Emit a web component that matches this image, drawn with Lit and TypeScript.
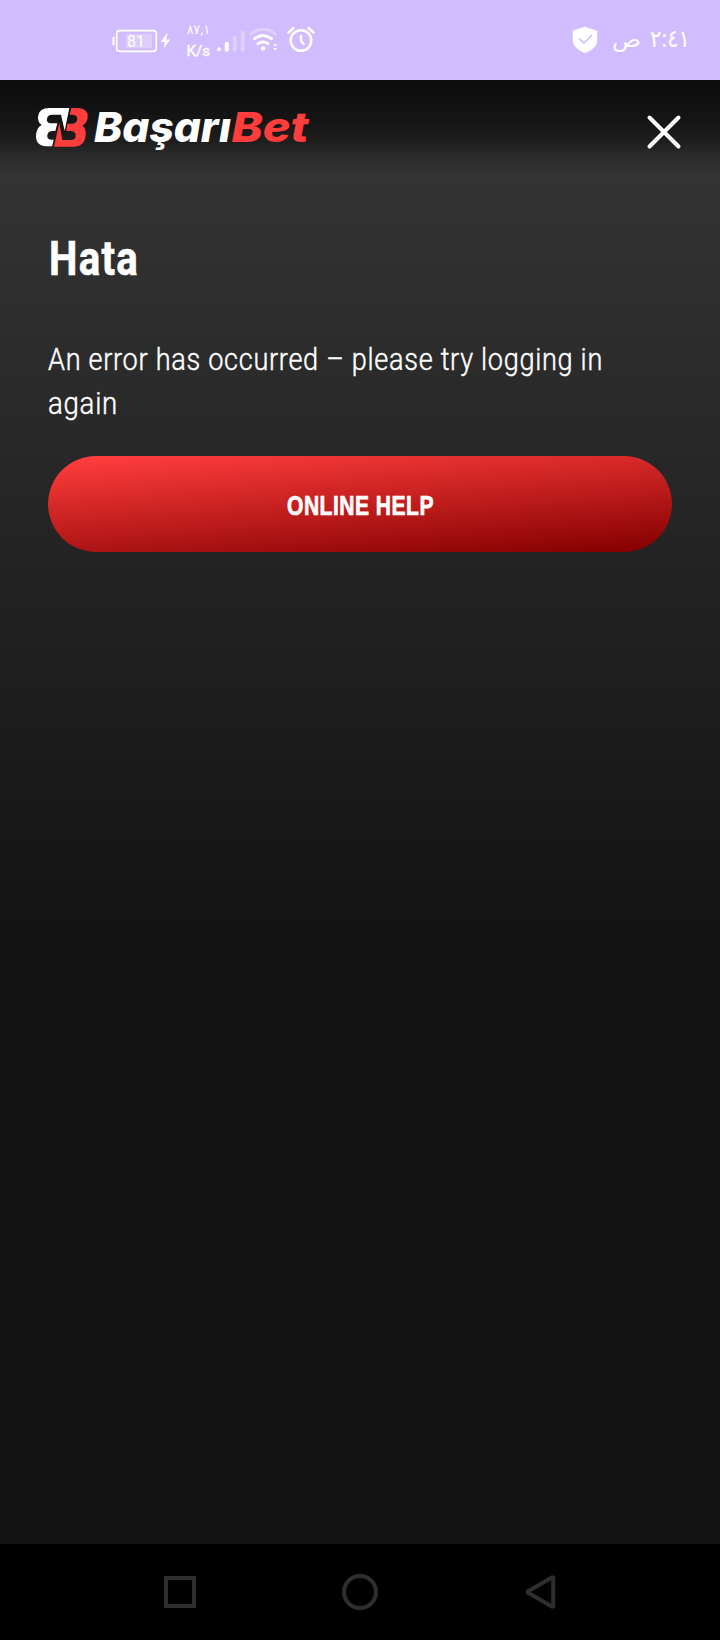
import { LitElement, html, css, svg } from "lit";
import { customElement } from "lit/decorators.js";

@customElement("status-bar")
class StatusBar extends LitElement {
  static styles = css`
    :host { display: block; height: 80px; background: #d1bcff; }
    svg { display: block; }
    .arabic { font-family: "Noto Sans", "DejaVu Sans", sans-serif; }
    .latin { font-family: Roboto, sans-serif; }
  `;
  render() {
    return html`<svg width="720" height="80" viewBox="0 0 720 80" fill="none" stroke-linecap="round" stroke="none">
      <rect x="126" y="34" width="26" height="14" fill="#fff" opacity=".25"/>
      <rect x="116.7" y="30.7" width="39.6" height="20.6" rx="3" stroke="#fff" stroke-width="1.7"/>
      <path d="M114.500 36.500c-2 0-2 1-2 2v5c0 1 0 2 2 2z" fill="#fff"/>
      <text class="latin" x="127" y="47" font-size="16" textLength="18" fill="#fff">81</text>
      <path d="M167.500 32.500 160.700 42h4l-1 6.500 6.500-9h-4z" fill="#fff"/>
      <text class="arabic" x="187" y="33.500" font-size="13" textLength="23" lengthAdjust="spacingAndGlyphs" fill="#fff" direction="ltr">٨٧,١</text>
      <text class="latin" x="186.500" y="55.700" font-size="15" textLength="23.500" lengthAdjust="spacingAndGlyphs" fill="#fff" stroke="#fff" stroke-width=".4">K/s</text>
      <g transform="translate(0 9.7)">
        <g stroke="#fff" stroke-width="4">
          <path d="M219 39.500v.1M226.800 34v6"/><path d="M234.800 28v12M242.800 23v17" opacity=".3"/>
        </g>
        <g stroke="#fff" stroke-width="2.800">
          <path d="M250.500 24.500Q263 14.500 275.500 24.500" opacity=".3"/>
          <path d="M254.500 29Q263 22.500 271.500 29M258 34Q263 30.500 268 34"/>
        </g>
        <circle cx="263" cy="38.700" r="2.200" fill="#fff"/>
        <path d="m273.200 36 2.100-2.500 2.100 2.500zm0 2.200 2.100 2.500 2.100-2.500z" fill="#fff"/>
      </g>
      <g stroke="#fff" stroke-width="2.400">
        <circle cx="301" cy="40.500" r="10.300"/><path d="M301 36v5l2.600 3"/><path d="m288.500 32.500 5-4.500M308.500 28l5 4.500" stroke-width="2.600"/>
      </g>
      <path d="M585 27 597 31v9c0 6-5 10-12 13-7-3-12-7-12-13v-9z" fill="#fff" stroke="#fff" stroke-linejoin="round" stroke-width=".5"/>
      <path d="m579.500 39 4.500 4 7.500-7.500" stroke="#d1bcff" stroke-width="1.600"/>
      <text class="arabic" x="612" y="47" font-size="22" textLength="29" lengthAdjust="spacingAndGlyphs" fill="#fff">ص</text>
      <text class="arabic" x="650" y="47" font-size="24" textLength="40" lengthAdjust="spacingAndGlyphs" fill="#fff">٢:٤١</text>
    </svg>`;
  }
}

@customElement("site-header")
class SiteHeader extends LitElement {
  static styles = css`
    :host {
      display: flex; justify-content: space-between; box-sizing: border-box; height: 100px;
      padding: 24px 39px 0 35px;
      background: linear-gradient(#0b0b0b 0, #151515 40%, #1d1d1d 60%, #2b2b2b 78%, #333 94%, #333);
    }
    svg { display: block; overflow: visible; }
    .close { margin-top: 10px; }
    .word { font-family: Inter, sans-serif; font-weight: 800; font-style: italic; font-size: 41px; }
  `;
  render() {
    return html`
      <svg width="290" height="66" viewBox="35 104 290 66">
        <g transform="translate(20 80) scale(.33333)">
          <path fill="#fff" d="M148 84H88Q56 84 54 111 53 126 65 135 48 144 48 170 49 199 84 199H96L101 179H93Q80 178 82 165 84 153 98 153H106L112 130H92Q79 129 81 116 83 104 97 104H123L134 152Z"/>
          <path fill="#ff3d3d" d="M154 84H174Q205 86 203 112 202 129 187 137 199 145 197 165 194 200 160 200H102L118 128 127 180H156Q167 178 167 167 167 154 154 153H138L142 131H157Q172 129 172 116 172 105 158 104H149Z"/>
        </g>
        <text class="word" x="94" y="142" textLength="137" lengthAdjust="spacingAndGlyphs" fill="#fff">Başarı</text>
        <text class="word" x="231.500" y="142" textLength="77" lengthAdjust="spacingAndGlyphs" fill="#ff3d3d">Bet</text>
      </svg>
      <svg class="close" width="34" height="36" viewBox="647 114 34 36">
        <path d="m649.500 117.500 29 29m0-29-29 29" stroke="#fff" stroke-width="4" stroke-linecap="round"/>
      </svg>`;
  }
}

@customElement("nav-bar")
class NavBar extends LitElement {
  static styles = css`
    :host { display: flex; justify-content: space-around; align-items: center; height: 96px; padding: 0 90px; background: #000; }
    svg { display: block; }
  `;
  render() {
    const icon = (shape: unknown) => html`<svg width="40" height="40" viewBox="-20 -20 40 40" fill="none" stroke="#2e2e2e" stroke-width="4">${shape}</svg>`;
    return html`
      ${icon(svg`<rect x="-14" y="-14" width="28" height="28"/>`)}
      ${icon(svg`<circle r="16"/>`)}
      ${icon(svg`<path d="M13.200-15.200V15.200L-13.200 0Z" stroke-linejoin="bevel"/>`)}`;
  }
}

@customElement("app-root")
class AppRoot extends LitElement {
  static styles = css`
    :host { display: flex; flex-direction: column; height: 1640px; background: #131313; font-family: Roboto, sans-serif; color: #fff; }
    .page { flex: 1; display: flex; flex-direction: column; background: linear-gradient(#333 0, #333 100px, #131313 860px); }
    .content { padding: 44px 48px 0; }
    svg { display: block; overflow: visible; }
    .title { font-size: 48px; font-weight: 700; letter-spacing: 1.5px; stroke: #fff; stroke-width: 0.6px; }
    .body { font-size: 31px; font-weight: 300; letter-spacing: 0.8px; stroke: #fff; stroke-width: 0.45px; }
    .help {
      display: flex; align-items: center; justify-content: center; width: 100%; height: 96px; margin-top: 20px;
      border: 0; padding: 0; border-radius: 48px;
      background: linear-gradient(175.5deg, #ff3d3d 3%, #850000 98%);
    }
    .label { font-size: 27px; font-weight: 700; letter-spacing: 0.6px; stroke: #fff; stroke-width: 0.7px; }
  `;
  render() {
    return html`
      <status-bar></status-bar>
      <main class="page">
        <site-header></site-header>
        <section class="content">
          <svg width="624" height="212" viewBox="48 224 624 212" fill="#fff">
            <text class="title" x="49" y="275" textLength="90" lengthAdjust="spacingAndGlyphs">Hata</text>
            <text class="body" x="48" y="370" textLength="555" lengthAdjust="spacingAndGlyphs">An error has occurred – please try logging in</text>
            <text class="body" x="48" y="414" textLength="70" lengthAdjust="spacingAndGlyphs">again</text>
          </svg>
          <button class="help">
            <svg width="146" height="30" fill="#fff"><text class="label" x="0" y="25.500" textLength="147" lengthAdjust="spacingAndGlyphs">ONLINE HELP</text></svg>
          </button>
        </section>
      </main>
      <nav-bar></nav-bar>`;
  }
}
